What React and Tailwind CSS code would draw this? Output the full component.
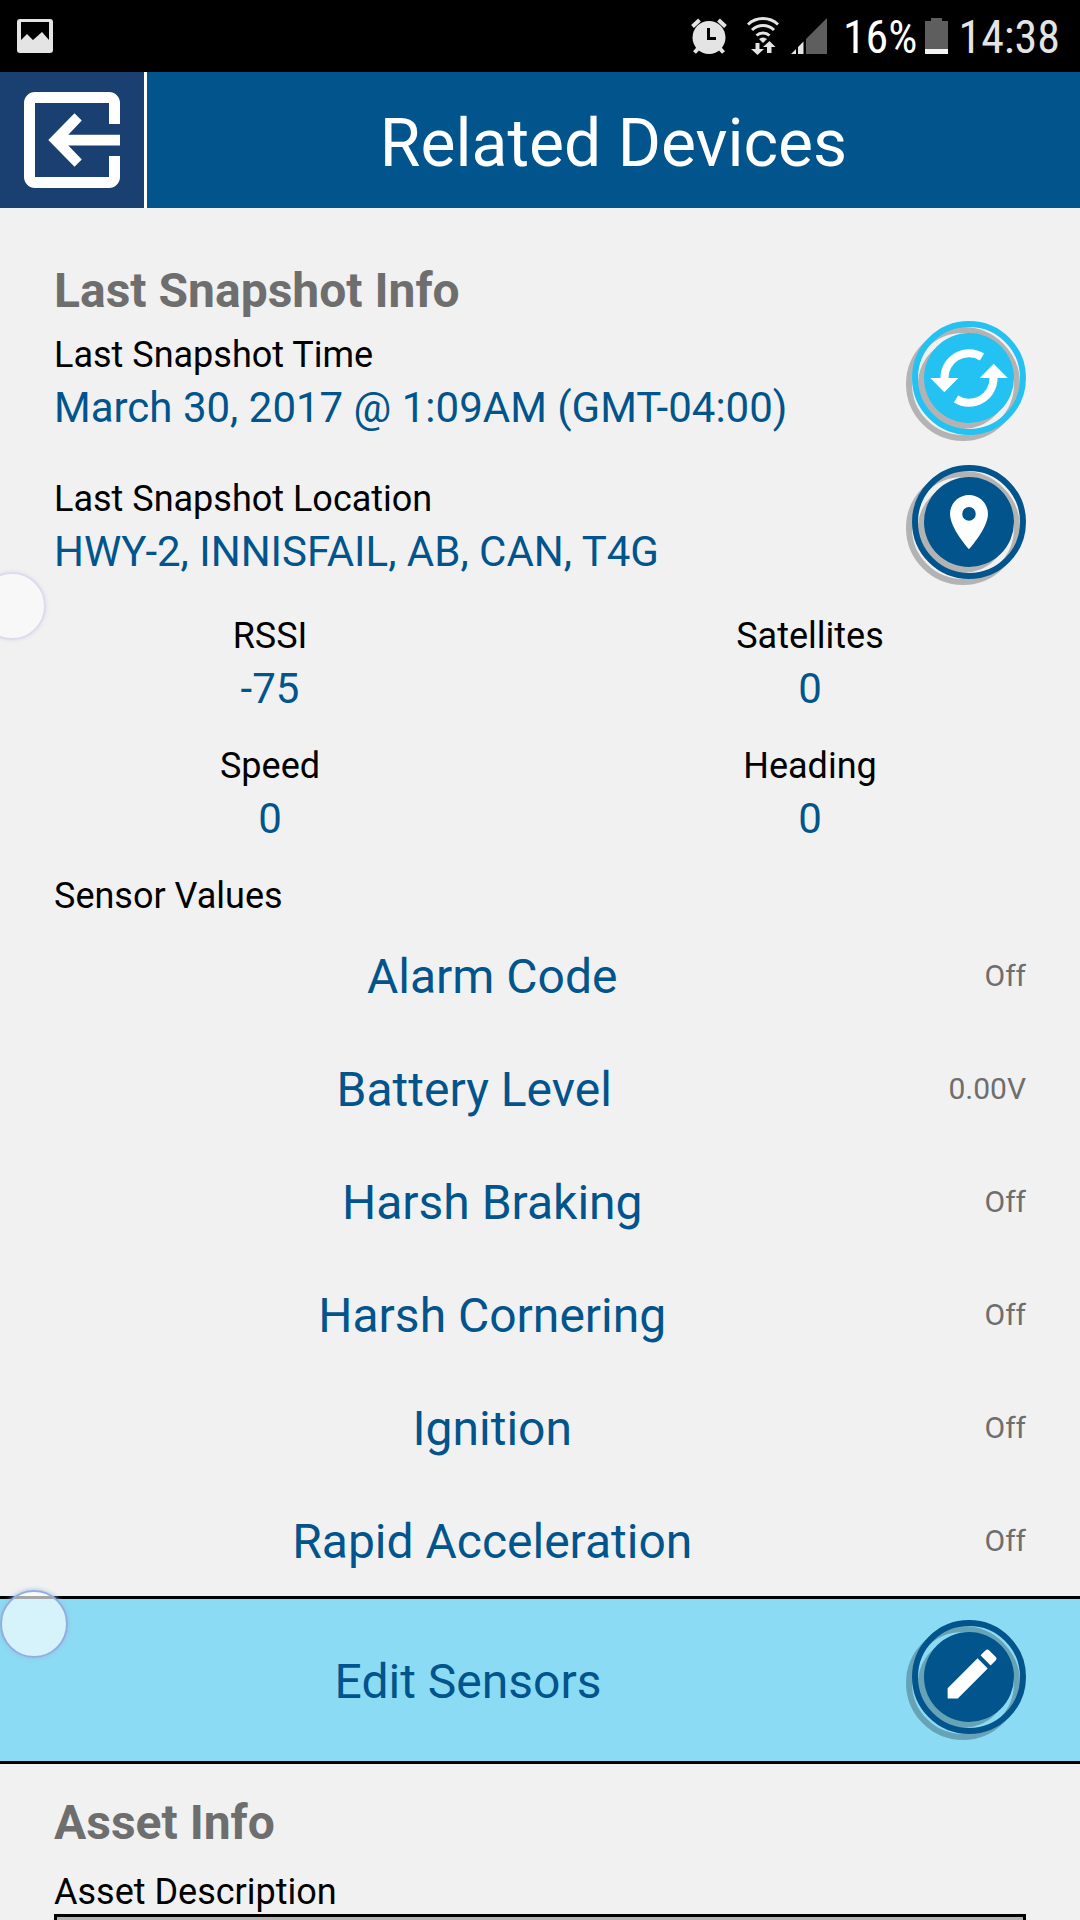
import React from 'react';
import { MdEdit, MdLocationOn } from 'react-icons/md';

const stats = [
    { label: 'RSSI', value: '-75' },
    { label: 'Satellites', value: '0' },
    { label: 'Speed', value: '0' },
    { label: 'Heading', value: '0' },
];

const sensors = [
    { name: 'Alarm Code', value: 'Off' },
    { name: 'Battery Level', value: '0.00V' },
    { name: 'Harsh Braking', value: 'Off' },
    { name: 'Harsh Cornering', value: 'Off' },
    { name: 'Ignition', value: 'Off' },
    { name: 'Rapid Acceleration', value: 'Off' },
];

const StatusBar = () => (
    <div className="h-[72px] shrink-0 bg-black flex items-center justify-between pl-[17px] pr-5 text-[#e4e4e4] font-['Roboto_Condensed',Roboto,sans-serif]">
        <svg width="36" height="36" viewBox="0 0 36 36" fill="currentColor">
            <path fillRule="evenodd" d="M3 1h30a3 3 0 0 1 3 3v28a3 3 0 0 1-3 3H3a3 3 0 0 1-3-3V4a3 3 0 0 1 3-3zM4 4v18l6-6 6 6 9-8 7 8V4z" />
        </svg>

        <div className="flex items-center">
            {/* Alarm */}
            <svg width="36" height="36" viewBox="0 0 36 36" className="mr-5">
                <g fill="none" stroke="currentColor" strokeWidth="4">
                    <path d="M1.5 8.5 8.5 2M34.5 8.5 27.5 2" />
                    <path d="M8 29.5 3.5 34.5M28 29.5l4.5 5" />
                </g>
                <circle cx="18" cy="19.5" r="16.5" fill="currentColor" />
                <path d="M17.5 10v10.5H25" fill="none" stroke="#000" strokeWidth="3" />
            </svg>

            {/* Wifi */}
            <svg width="32" height="38" viewBox="0 0 32 38" className="mr-3">
                <g fill="none" stroke="currentColor" strokeWidth="3">
                    <path d="M1 7.5a22 22 0 0 1 30 0" />
                    <path d="M5 13a16 16 0 0 1 22 0" />
                    <path d="M9.5 18.5a9.5 9.5 0 0 1 13 0" />
                </g>
                <path d="M12 22a6 6 0 0 1 8 0l-4 4z" fill="currentColor" />
                <path d="M8.5 26h4v6H17l-6.5 6L4 32h4.5zM20 36v-6h-4l6.5-6 6 6h-4v6z" fill="currentColor" />
            </svg>

            {/* Mobile signal */}
            <svg width="36" height="36" viewBox="0 0 36 36" className="mr-4">
                <path d="M36 0v36H15V21z" fill="#5e5e5e" />
                <path d="M0 36l5-5v5zM7 36v-7l5.5-5.5V36z" fill="currentColor" />
            </svg>

            <span className="pt-0.5 text-[46px] leading-[56px] text-white">16%</span>

            {/* Battery */}
            <svg width="23" height="36" viewBox="0 0 23 36" className="ml-2 mr-[10px]">
                <path d="M6 0h11v3h6v33H0V3h6z" fill="#5e5e5e" />
                <path d="M0 31h23v5H0z" fill="#f4f4f4" />
            </svg>

            <span className="pt-0.5 text-[46px] leading-[56px]">14:38</span>
        </div>
    </div>
);

const Header = () => (
    <header className="h-[136px] shrink-0 flex bg-[#01548c] text-white">
        <button aria-label="Back" className="w-[147px] shrink-0 bg-[#194070] border-r-[3px] border-white flex items-center justify-center">
            <svg width="96" height="96" viewBox="0 0 96 96" fill="currentColor">
                <path d="M11 0h74a11 11 0 0 1 11 11v21H85V11H11v74h74V64h11v21a11 11 0 0 1-11 11H11A11 11 0 0 1 0 85V11A11 11 0 0 1 11 0z" />
                <path d="M24.3 48 50.5 21.3l7.3 7.2-13.5 14.2H96v10.8H44.3l13.5 14-7.3 7.2z" />
            </svg>
        </button>
        <h1 className="flex-1 self-center pt-2 text-center text-[66px] leading-[80px]">Related Devices</h1>
    </header>
);

// Disc inside a ring, both with a hard shadow to the lower left
const RoundButton = ({ label, color, children }) => (
    <button aria-label={label} className="shrink-0">
        <svg width="120" height="120" viewBox="0 0 120 120" className="text-white">
            <g opacity="0.25">
                <circle cx="57" cy="63" r="54" fill="none" stroke="#000" strokeWidth="6" />
                <circle cx="57" cy="63" r="45" fill="#000" />
            </g>
            <circle cx="63" cy="57" r="54" fill="none" stroke={color} strokeWidth="6" />
            <circle cx="63" cy="57" r="45" fill={color} />
            {children}
        </svg>
    </button>
);

const SnapshotRow = ({ label, value, children }) => (
    <div className="flex justify-between px-[54px]">
        <div className="pt-[10px]">
            <p className="text-[36px] leading-[48px]">{label}</p>
            <p className="text-[42px] leading-[58px] text-[#01548c]">{value}</p>
        </div>
        {children}
    </div>
);

const Touch = ({ className }) => (
    <span className={`absolute w-[68px] h-[68px] rounded-full border-2 pointer-events-none ${className}`} />
);

export default function App() {
    return (
        <div className="relative h-screen overflow-hidden flex flex-col bg-[#f1f1f1] text-black font-[Roboto,sans-serif]">
            <StatusBar />
            <Header />

            <main className="shrink-0">
                <section className="pt-[55px]">
                    <h2 className="px-[54px] mb-[2px] text-[48px] leading-[56px] font-bold text-[#6e6e6e]">Last Snapshot Info</h2>

                    <div className="flex flex-col gap-6">
                        <SnapshotRow label="Last Snapshot Time" value="March 30, 2017 @ 1:09AM (GMT-04:00)">
                            <RoundButton label="Refresh snapshot" color="#23c2f2">
                                <g fill="none" stroke="currentColor" strokeWidth="8">
                                    <path d="M38.5 58a24.5 24.5 0 0 1 37.5-22" />
                                    <path d="M87.5 56a24.5 24.5 0 0 1-37.5 22" />
                                </g>
                                <path d="M24.3 57h28l-14 14.3zM101.7 57h-28l14-14.3z" fill="currentColor" />
                            </RoundButton>
                        </SnapshotRow>
                        <SnapshotRow label="Last Snapshot Location" value="HWY-2, INNISFAIL, AB, CAN, T4G">
                            <RoundButton label="Show on map" color="#01548c">
                                <MdLocationOn x="30.5" y="24.5" size={65} />
                            </RoundButton>
                        </SnapshotRow>
                    </div>

                    <dl className="mt-[27px] grid grid-cols-2 gap-y-6 text-center">
                        {stats.map((stat) => (
                            <div key={stat.label}>
                                <dt className="text-[36px] leading-[48px]">{stat.label}</dt>
                                <dd className="text-[42px] leading-[58px] text-[#01548c]">{stat.value}</dd>
                            </div>
                        ))}
                    </dl>

                    <h3 className="mt-[26px] px-[54px] text-[36px] leading-[44px]">Sensor Values</h3>
                    <ul>
                        {sensors.map((sensor) => (
                            <li key={sensor.name} className="h-[113px] pt-1 pr-[54px] flex items-center">
                                <span className="flex-1 text-center text-[48px] leading-[56px] text-[#01548c]">{sensor.name}</span>
                                <span className="pb-0.5 text-[30px] leading-[36px] text-[#6e6e6e]">{sensor.value}</span>
                            </li>
                        ))}
                    </ul>
                </section>

                <section className="flex items-center px-[54px] py-[21px] border-y-[3px] border-black bg-[#8bdbf4]">
                    <span className="flex-1 pt-1 mr-6 text-center text-[48px] leading-[56px] text-[#01548c]">Edit Sensors</span>
                    <RoundButton label="Edit sensors" color="#01548c">
                        <MdEdit x="33.5" y="21.5" size={65} />
                    </RoundButton>
                </section>

                <section className="px-[54px] pt-[31px]">
                    <h2 className="mb-[19px] text-[48px] leading-[56px] font-bold text-[#6e6e6e]">Asset Info</h2>
                    <label htmlFor="asset-description" className="block text-[36px] leading-[44px]">Asset Description</label>
                    <input
                        id="asset-description"
                        type="text"
                        className="block w-full h-[96px] px-4 text-[42px] border-[3px] border-black bg-[#b5b1b5]"
                    />
                </section>
            </main>

            {/* Touch indicators */}
            <Touch className="top-[572px] -left-[22px] border-[#dcdcec] bg-[#f8f8f9] shadow-[0_0_4px_#dcdcec]" />
            <Touch className="top-[1590px] left-0 border-[#8fb0dd] bg-white/65 shadow-[0_0_5px_#9dbbe4]" />
        </div>
    );
}
